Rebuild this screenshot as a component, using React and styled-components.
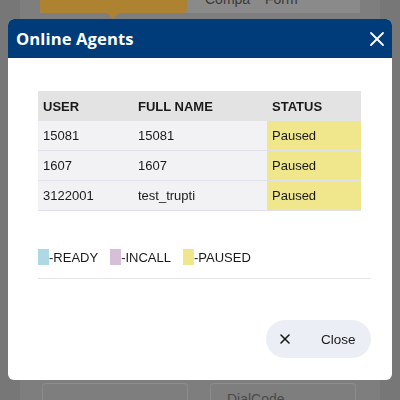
import React from "react";
import styled, { createGlobalStyle } from "styled-components";
import { X } from "lucide-react";

const Global = createGlobalStyle`
  html, body { margin: 0; padding: 0; }
  body {
    background: #777777;
    font-family: "Liberation Sans", Arial, sans-serif;
    width: 400px;
    height: 400px;
    overflow: hidden;
  }
`;

const Page = styled.div`
  margin: 0 20px;
  height: 400px;
  background: #7e7e7e;
  display: flex;
  flex-direction: column;
  overflow: hidden;
`;

const TabBar = styled.div`
  display: flex;
  margin: 0 20px 0 20px;
  height: 13px;
  background: #8a8a8a;
`;

const Tab = styled.div`
  position: relative;
  width: ${(p) => p.$w}px;
  height: 13px;
  background: ${(p) => (p.$active ? "#ad8230" : "transparent")};
  border-radius: 0 0 4px 4px;
  color: #3a3a3a;
  font-size: 14px;
  line-height: 14px;
  padding-left: ${(p) => p.$pad || 0}px;
  box-sizing: border-box;
  overflow: hidden;
`;

const TabText = styled.span`
  display: block;
  margin-top: -8px;
`;

const Pointer = styled.div`
  position: absolute;
  left: 67px;
  top: 13px;
  width: 0;
  height: 0;
  border-left: 6px solid transparent;
  border-right: 6px solid transparent;
  border-top: 6px solid #ad8230;
`;

const TabWrap = styled.div`
  position: relative;
`;

const Spacer = styled.div`
  flex: 1;
`;

const CardsRow = styled.div`
  display: flex;
  gap: 22px;
  padding-left: 22px;
  height: 17px;
`;

const Card = styled.div`
  width: 146px;
  border: 1px solid #8c8c8c;
  border-bottom: none;
  border-radius: 4px 4px 0 0;
  box-sizing: border-box;
  color: #4a4a4a;
  font-size: 14px;
  padding: 7px 0 0 16px;
`;

const Overlay = styled.div`
  position: fixed;
  inset: 0;
  padding: 19px 8px 20px;
  display: flex;
`;

const Modal = styled.div`
  flex: 1;
  background: #ffffff;
  border-radius: 6px;
  overflow: hidden;
  display: flex;
  flex-direction: column;
`;

const Header = styled.div`
  height: 39px;
  background: #003b7a;
  display: flex;
  align-items: center;
  justify-content: space-between;
  padding: 0 3px 0 8px;
`;

const Title = styled.h2`
  margin: 0;
  color: #ffffff;
  font-family: "Open Sans", sans-serif;
  font-weight: 700;
  font-size: 16.6px;
  letter-spacing: 0.1px;
`;

const IconButton = styled.button`
  border: none;
  background: transparent;
  color: #ffffff;
  padding: 0;
  display: flex;
  cursor: pointer;
`;

const Body = styled.div`
  flex: 1;
  padding: 33px 21px 22px;
  display: flex;
  flex-direction: column;
`;

const Table = styled.table`
  margin: 0 10px 0 9px;
  border-collapse: collapse;
  font-size: 13px;
  color: #1a1a1a;
  table-layout: fixed;
  width: 323px;
`;

const Th = styled.th`
  text-align: left;
  font-weight: 700;
  height: 30px;
  padding: 0 0 0 5px;
  box-sizing: border-box;
  background: #e3e3e4;
  width: ${(p) => p.$w}px;
`;

const Td = styled.td`
  height: 29px;
  padding: 0 0 0 5px;
  background: ${(p) => p.$bg || "#f2f1f3"};
  border-bottom: 1px solid #dfe0ea;
`;

const Legend = styled.div`
  display: flex;
  gap: 12px;
  margin: 38px 0 0 9px;
  padding-bottom: 13px;
  border-bottom: 1px solid #e6e6e6;
`;

const LegendItem = styled.div`
  display: flex;
  align-items: center;
  font-size: 13px;
  color: #1a1a1a;
`;

const Swatch = styled.span`
  width: 11px;
  height: 16px;
  background: ${(p) => p.$c};
`;

const Footer = styled.div`
  margin-top: auto;
  display: flex;
  justify-content: flex-end;
`;

const CloseButton = styled.button`
  height: 38px;
  width: 105px;
  border: none;
  border-radius: 19px;
  background: #eceef5;
  display: flex;
  align-items: center;
  padding: 0 0 0 11px;
  gap: 28px;
  font-family: "Liberation Sans", Arial, sans-serif;
  font-size: 13.5px;
  color: #1a1a1a;
  cursor: pointer;
`;

const rows = [
  ["15081", "15081", "Paused"],
  ["1607", "1607", "Paused"],
  ["3122001", "test_trupti", "Paused"],
];

export default function App() {
  return (
    <>
      <Global />
      <Page>
        <TabBar>
          <TabWrap>
            <Tab $active $w={147} />
            <Pointer />
          </TabWrap>
          <Tab $w={78} $pad={18}>
            <TabText>Compa</TabText>
          </Tab>
          <Tab $w={95}>
            <TabText>Form</TabText>
          </Tab>
        </TabBar>
        <Spacer />
        <CardsRow>
          <Card />
          <Card>DialCode</Card>
        </CardsRow>
      </Page>
      <Overlay>
        <Modal>
          <Header>
            <Title>Online Agents</Title>
            <IconButton aria-label="close">
              <X size={24} strokeWidth={1.8} />
            </IconButton>
          </Header>
          <Body>
            <Table>
              <thead>
                <tr>
                  <Th $w={95}>USER</Th>
                  <Th $w={134}>FULL NAME</Th>
                  <Th $w={94}>STATUS</Th>
                </tr>
              </thead>
              <tbody>
                {rows.map((r, i) => (
                  <tr key={i}>
                    <Td>{r[0]}</Td>
                    <Td>{r[1]}</Td>
                    <Td $bg="#f0e68c">{r[2]}</Td>
                  </tr>
                ))}
              </tbody>
            </Table>
            <Legend>
              <LegendItem>
                <Swatch $c="#add8e6" />-READY
              </LegendItem>
              <LegendItem>
                <Swatch $c="#d8bfd8" />-INCALL
              </LegendItem>
              <LegendItem>
                <Swatch $c="#f0e68c" />-PAUSED
              </LegendItem>
            </Legend>
            <Footer>
              <CloseButton>
                <X size={16} strokeWidth={2.4} />
                Close
              </CloseButton>
            </Footer>
          </Body>
        </Modal>
      </Overlay>
    </>
  );
}
